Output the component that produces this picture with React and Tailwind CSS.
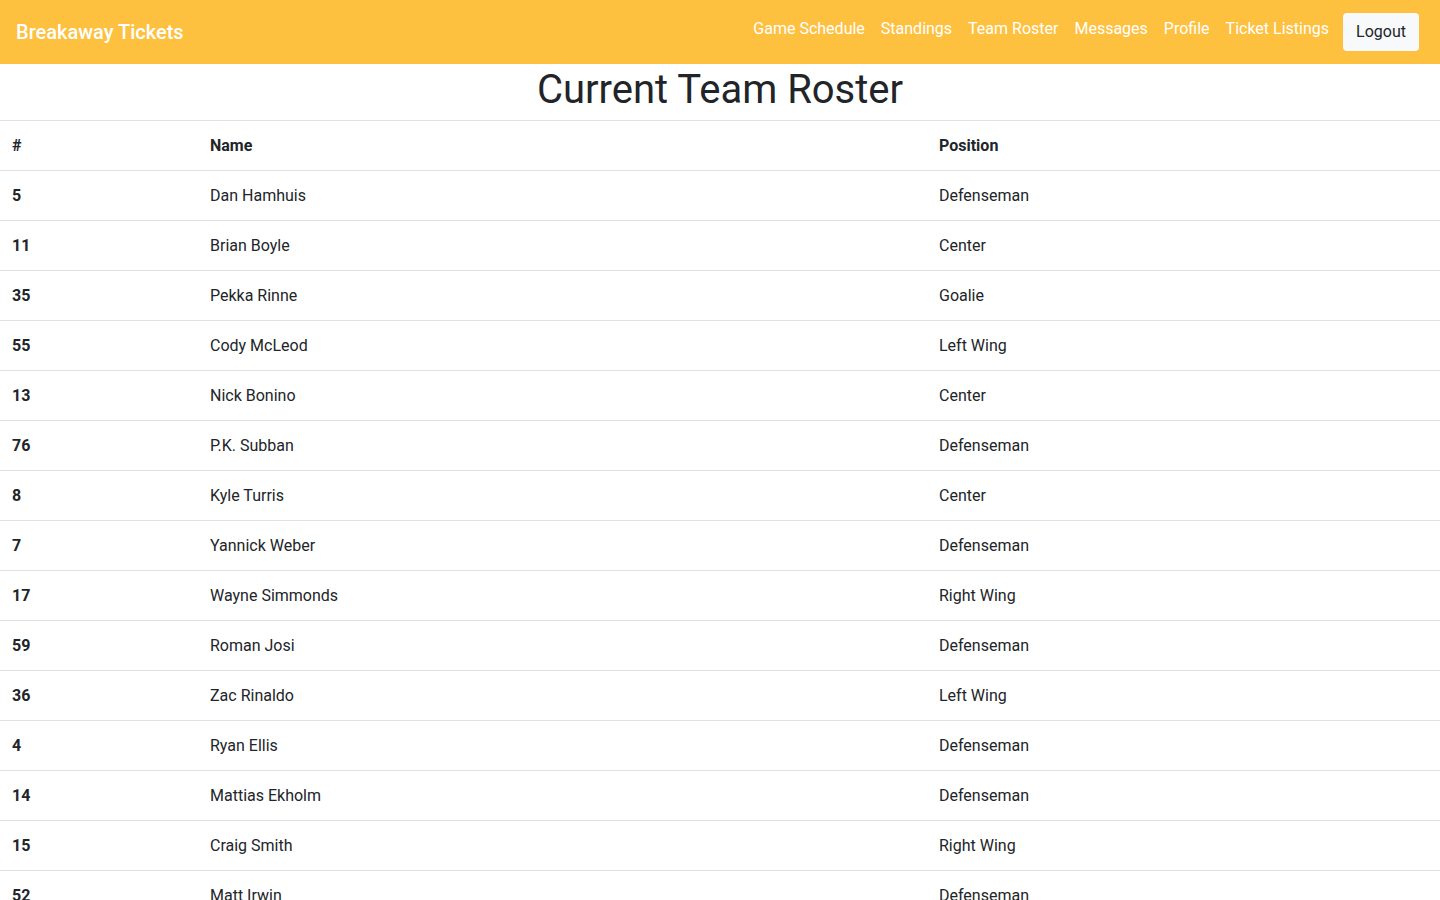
const navLinks = ['Game Schedule', 'Standings', 'Team Roster', 'Messages', 'Profile', 'Ticket Listings'];

const roster = [
  { num: 5, name: 'Dan Hamhuis', pos: 'Defenseman' },
  { num: 11, name: 'Brian Boyle', pos: 'Center' },
  { num: 35, name: 'Pekka Rinne', pos: 'Goalie' },
  { num: 55, name: 'Cody McLeod', pos: 'Left Wing' },
  { num: 13, name: 'Nick Bonino', pos: 'Center' },
  { num: 76, name: 'P.K. Subban', pos: 'Defenseman' },
  { num: 8, name: 'Kyle Turris', pos: 'Center' },
  { num: 7, name: 'Yannick Weber', pos: 'Defenseman' },
  { num: 17, name: 'Wayne Simmonds', pos: 'Right Wing' },
  { num: 59, name: 'Roman Josi', pos: 'Defenseman' },
  { num: 36, name: 'Zac Rinaldo', pos: 'Left Wing' },
  { num: 4, name: 'Ryan Ellis', pos: 'Defenseman' },
  { num: 14, name: 'Mattias Ekholm', pos: 'Defenseman' },
  { num: 15, name: 'Craig Smith', pos: 'Right Wing' },
  { num: 52, name: 'Matt Irwin', pos: 'Defenseman' },
  { num: 9, name: 'Filip Forsberg', pos: 'Left Wing' },
  { num: 33, name: 'Viktor Arvidsson', pos: 'Right Wing' },
  { num: 92, name: 'Ryan Johansen', pos: 'Center' },
  { num: 56, name: 'Kevin Fiala', pos: 'Left Wing' },
  { num: 19, name: 'Calle Jarnkrok', pos: 'Center' },
  { num: 51, name: 'Austin Watson', pos: 'Right Wing' },
  { num: 10, name: 'Colton Sissons', pos: 'Center' },
  { num: 74, name: 'Juuse Saros', pos: 'Goalie' },
  { num: 32, name: 'Frederick Gaudreau', pos: 'Center' },
  { num: 20, name: 'Miikka Salomaki', pos: 'Right Wing' },
  { num: 57, name: 'Dante Fabbro', pos: 'Defenseman' },
  { num: 25, name: 'Mikael Granlund', pos: 'Center' },
  { num: 3, name: 'Steven Santini', pos: 'Defenseman' },
  { num: 29, name: 'Connor Ingram', pos: 'Goalie' },
];

function Navbar() {
  return (
    <nav className="flex h-16 items-center justify-between bg-[#fec03f] pl-4 pr-[21px]">
      <span className="text-[20px] font-medium text-white">Breakaway Tickets</span>
      <div className="flex items-center">
        <ul className="flex pb-[6px]">
          {navLinks.map((link) => (
            <li key={link}>
              <a href="#" className="block px-2 text-[16px] text-white">
                {link}
              </a>
            </li>
          ))}
        </ul>
        <button className="ml-[6px] h-[38px] w-[76px] rounded bg-[#f8f9fa] text-[16px] text-[#212529]">
          Logout
        </button>
      </div>
    </nav>
  );
}

function RosterRow({ num, name, pos }) {
  return (
    <div className="grid h-[50px] grid-cols-[198px_729px_1fr] items-center border-t border-[#dee2e6]">
      <div className="px-3 font-bold">{num}</div>
      <div className="px-3">{name}</div>
      <div className="px-3">{pos}</div>
    </div>
  );
}

export default function App() {
  return (
    <div className="min-h-screen bg-white text-[16px] text-[#212529]" style={{ fontFamily: 'Roboto, "Open Sans", sans-serif' }}>
      <Navbar />
      <h1 className="flex h-14 items-center justify-center pb-1 text-[40px] leading-tight">Current Team Roster</h1>

      {/* roster table */}
      <div className="mb-4">
        <div className="grid h-[50px] grid-cols-[198px_729px_1fr] items-center border-t border-[#dee2e6] font-bold">
          <div className="px-3">#</div>
          <div className="px-3">Name</div>
          <div className="px-3">Position</div>
        </div>
        {roster.map((p) => (
          <RosterRow key={p.num} {...p} />
        ))}
        <div className="border-t border-[#dee2e6]" />
      </div>
    </div>
  );
}
